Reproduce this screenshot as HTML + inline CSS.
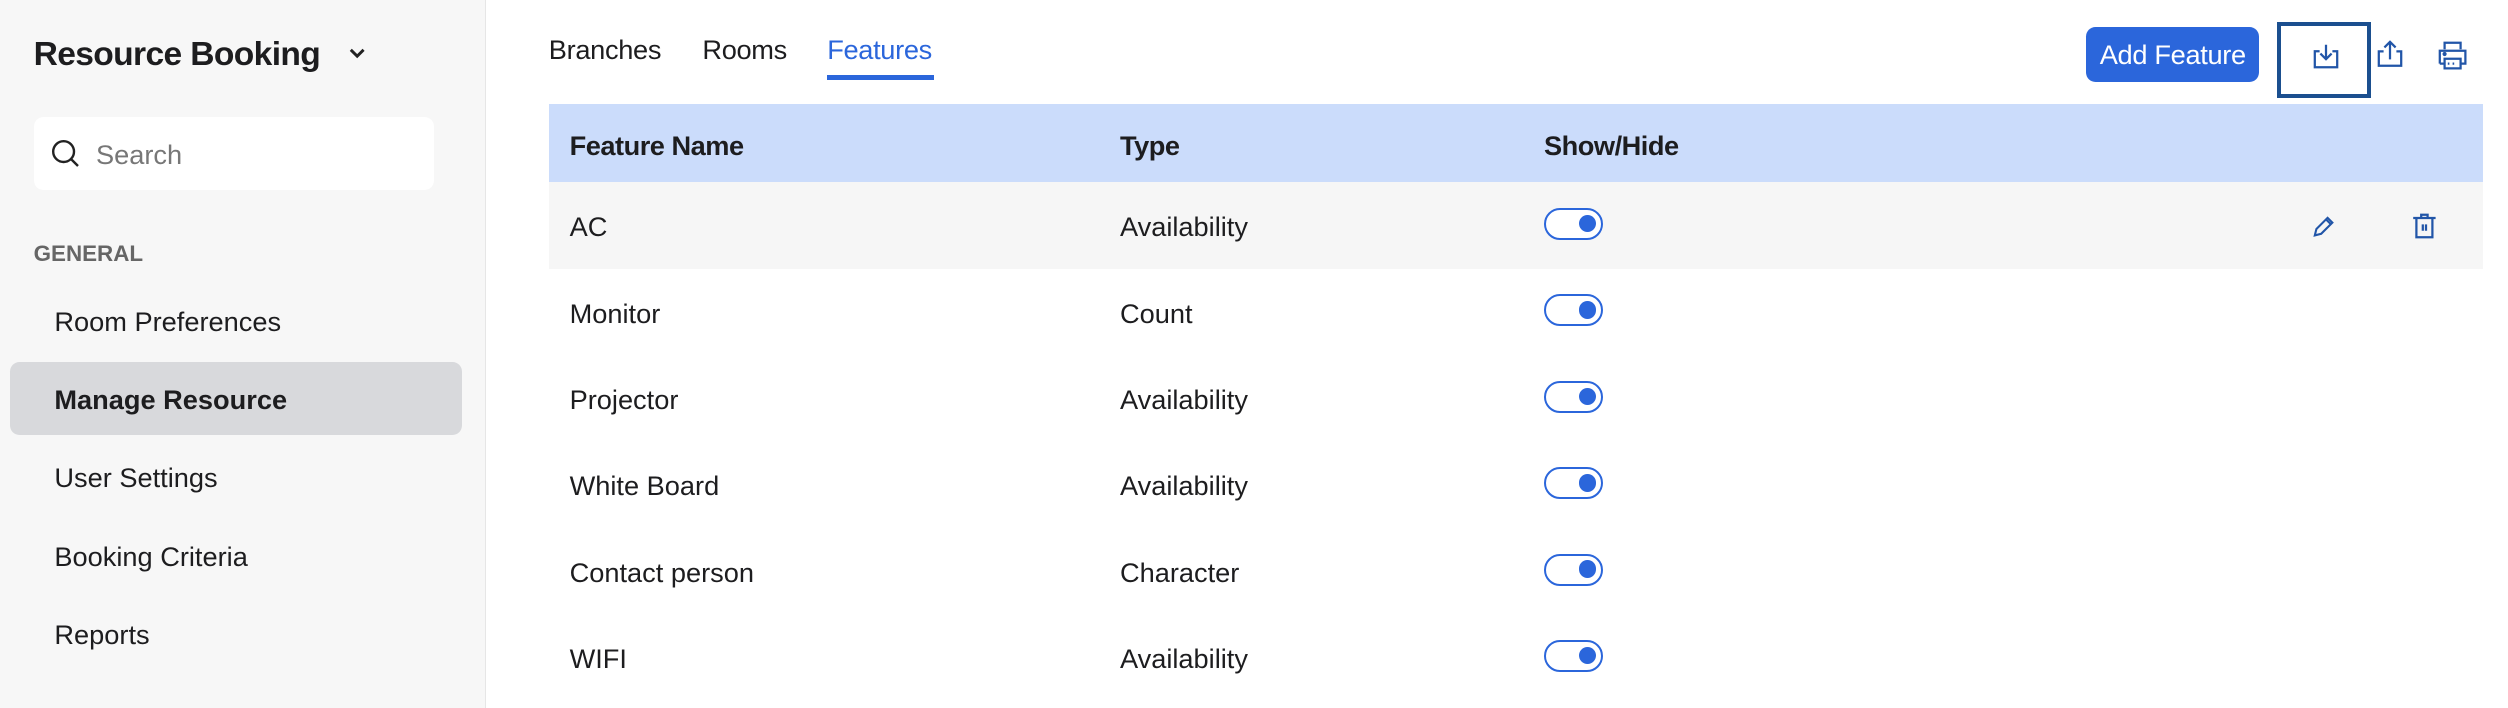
<!DOCTYPE html>
<html><head><style>
*{box-sizing:border-box;margin:0;padding:0}
html,body{width:2508px;height:708px;overflow:hidden;background:#fff}
#w{zoom:1.6;width:1568px;height:443px;position:relative;font-family:"Liberation Sans",sans-serif;color:#1d1d1f}
.sb{position:absolute;left:0;top:0;width:304px;height:443px;background:#f7f7f7;border-right:1px solid #e6e6e6}
.a{position:absolute;white-space:nowrap}
.mi{position:absolute;left:34px;font-size:17px;line-height:20px}
.row{position:absolute;left:343px;width:1209px;height:54px}
.row span{position:absolute;top:18px;font-size:17px;line-height:20px}
.tg{position:absolute;left:965px;width:37px;height:20px;border:1.5px solid #2b66db;border-radius:10px;background:#fff}
.tg:after{content:"";position:absolute;right:3px;top:3px;width:11px;height:11px;border-radius:50%;background:#2b66db}
</style></head><body><div id="w">
<div class="sb">
<div class="a" style="left:21px;top:21px;font-size:21px;font-weight:bold;line-height:26px;letter-spacing:-0.4px">Resource Booking</div>
<svg class="a" style="left:216px;top:28px" width="14" height="10" viewBox="0 0 14 10"><path d="M3 3l4 4 4-4" fill="none" stroke="#222" stroke-width="1.8"/></svg>
<div class="a" style="left:21px;top:73px;width:250px;height:46px;background:#fff;border-radius:6px"></div>
<svg class="a" style="left:31px;top:86px" width="20" height="20" viewBox="0 0 20 20"><circle cx="8.5" cy="8.5" r="6.5" fill="none" stroke="#222" stroke-width="1.5"/><path d="M13.5 13.5l4 4" stroke="#222" stroke-width="1.5"/></svg>
<div class="a" style="left:60px;top:87px;font-size:17px;color:#777;line-height:20px">Search</div>
<div class="a" style="left:21px;top:150px;font-size:14px;font-weight:bold;color:#666;line-height:17px">GENERAL</div>
<div class="mi" style="top:191px">Room Preferences</div>
<div class="a" style="left:6px;top:226px;width:283px;height:46px;background:#d8d9dc;border-radius:6px"></div>
<div class="mi" style="top:240px;font-weight:bold">Manage Resource</div>
<div class="mi" style="top:289px">User Settings</div>
<div class="mi" style="top:338px">Booking Criteria</div>
<div class="mi" style="top:387px">Reports</div>
</div>
<div class="a" style="left:343px;top:21px;font-size:17px;line-height:20px;letter-spacing:-0.2px">Branches</div>
<div class="a" style="left:439px;top:21px;font-size:17px;line-height:20px;letter-spacing:-0.2px">Rooms</div>
<div class="a" style="left:517px;top:21px;font-size:17px;line-height:20px;color:#2b66db;letter-spacing:-0.2px">Features</div>
<div class="a" style="left:517px;top:47px;width:67px;height:3px;background:#2b66db"></div>
<div class="a" style="left:1304px;top:17px;width:108px;height:34px;background:#2b66db;border-radius:6px;color:#fff;font-size:17px;line-height:35px;text-align:center;letter-spacing:-0.2px">Add Feature</div>
<div class="a" style="left:1423px;top:14px;width:59px;height:47px;border:3px solid #1b4f8f"></div>
<svg class="a" style="left:1444px;top:25px" width="20" height="20" viewBox="0 0 20 20" fill="none" stroke="#2155a8" stroke-width="1.4"><path d="M6 7H3v10h14V7h-3M10 3v9M6.5 8.5L10 12l3.5-3.5"/></svg>
<svg class="a" style="left:1484px;top:23px" width="20" height="20" viewBox="0 0 20 20" fill="none" stroke="#2155a8" stroke-width="1.4"><path d="M6 9H3v9h14V9h-3M10 14V3M6.5 6.5L10 3l3.5 3.5"/></svg>
<svg class="a" style="left:1522px;top:24px" width="22" height="22" viewBox="0 0 22 22" fill="none" stroke="#2155a8" stroke-width="1.4"><path d="M6 7V3h10v4M3 16V8h16v8h-3M6 16H3M6 13h10v6H6z M8 16h1M11 16h1M14 16h0"/><circle cx="6" cy="10" r=".6" fill="#2155a8"/></svg>
<div class="a" style="left:343px;top:65px;width:1209px;height:49px;background:#cbdcfb"></div>
<div class="a" style="left:356px;top:81px;font-size:17px;font-weight:bold;line-height:20px;letter-spacing:-0.3px">Feature Name</div>
<div class="a" style="left:700px;top:81px;font-size:17px;font-weight:bold;line-height:20px;letter-spacing:-0.3px">Type</div>
<div class="a" style="left:965px;top:81px;font-size:17px;font-weight:bold;line-height:20px;letter-spacing:-0.3px">Show/Hide</div>
<div class="row" style="top:114px;background:#f6f6f6"><span style="left:13px">AC</span><span style="left:357px">Availability</span></div>
<div class="tg" style="top:130px"></div>
<svg class="a" style="left:1444px;top:133px" width="17" height="17" viewBox="0 0 17 17" fill="none" stroke="#2155a8" stroke-width="1.3"><path d="M3 14l1-4 7-7 3 3-7 7z M10 4l3 3"/></svg>
<svg class="a" style="left:1506px;top:131px" width="18" height="20" viewBox="0 0 18 20" fill="none" stroke="#2155a8" stroke-width="1.4"><path d="M2 5h14M7 5V3h4v2M4 5v12h10V5M8 9v4M10 9v4"/></svg>
<div class="row" style="top:168px"><span style="left:13px">Monitor</span><span style="left:357px">Count</span></div>
<div class="tg" style="top:184px"></div>
<div class="row" style="top:222px"><span style="left:13px">Projector</span><span style="left:357px">Availability</span></div>
<div class="tg" style="top:238px"></div>
<div class="row" style="top:276px"><span style="left:13px">White Board</span><span style="left:357px">Availability</span></div>
<div class="tg" style="top:292px"></div>
<div class="row" style="top:330px"><span style="left:13px">Contact person</span><span style="left:357px">Character</span></div>
<div class="tg" style="top:346px"></div>
<div class="row" style="top:384px"><span style="left:13px">WIFI</span><span style="left:357px">Availability</span></div>
<div class="tg" style="top:400px"></div>
</div></body></html>
